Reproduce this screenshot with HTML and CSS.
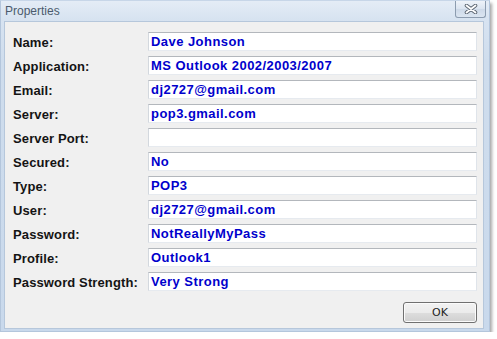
FILE: index.html
```html
<!DOCTYPE html>
<html>
<head>
<meta charset="utf-8">
<link rel="stylesheet" href="styles.css">
</head>
<body>
<div class="window">
  <div class="titlebar">
    <span class="title">Properties</span>
    <button class="close" aria-label="Close">
      <svg width="14" height="10" viewBox="0 0 14 10">
        <path d="M2.5 1.5 L11.5 8.5 M11.5 1.5 L2.5 8.5" stroke="#5a6470" stroke-width="3.6" stroke-linecap="round"/>
        <path d="M2.5 1.5 L11.5 8.5 M11.5 1.5 L2.5 8.5" stroke="#ffffff" stroke-width="1.8" stroke-linecap="round"/>
      </svg>
    </button>
  </div>
  <div class="content">
    <div class="grid">
      <div class="label">Name:</div><div class="field">Dave Johnson</div>
      <div class="label">Application:</div><div class="field">MS Outlook 2002/2003/2007</div>
      <div class="label">Email:</div><div class="field">dj2727@gmail.com</div>
      <div class="label">Server:</div><div class="field">pop3.gmail.com</div>
      <div class="label">Server Port:</div><div class="field"></div>
      <div class="label">Secured:</div><div class="field">No</div>
      <div class="label">Type:</div><div class="field">POP3</div>
      <div class="label">User:</div><div class="field">dj2727@gmail.com</div>
      <div class="label">Password:</div><div class="field">NotReallyMyPass</div>
      <div class="label">Profile:</div><div class="field">Outlook1</div>
      <div class="label">Password Strength:</div><div class="field">Very Strong</div>
    </div>
    <div class="buttons">
      <button class="ok">OK</button>
    </div>
  </div>
</div>
</body>
</html>
```

FILE: styles.css
```css
html, body {
  margin: 0;
  padding: 0;
  background: #ffffff;
}

.window {
  width: 490px;
  height: 332px;
  display: flex;
  flex-direction: column;
  background: linear-gradient(to bottom, #dbe6f3 0px, #cfdded 60px, #c9d9ec 100%);
  box-shadow: 2px 3px 3px rgba(0, 0, 0, 0.35);
  box-sizing: border-box;
  border: 1px solid #b4c6dc;
  border-top-color: #c7d6e8;
}

.titlebar {
  height: 20px;
  display: flex;
  align-items: flex-start;
  justify-content: space-between;
  background: linear-gradient(to bottom, #e4ecf6, #d6e2f0);
  flex: none;
}

.title {
  font-family: "Liberation Sans", Arial, sans-serif;
  font-size: 12px;
  color: #4b5b6d;
  margin: 3px 0 0 4px;
  line-height: 14px;
}

.close {
  width: 31px;
  height: 17px;
  margin: 0 3px 0 0;
  padding: 0;
  box-sizing: border-box;
  border: 1px solid #8c9caf;
  border-top: none;
  border-radius: 0 0 3px 3px;
  background: linear-gradient(to bottom, #eef3f9, #dae4f0 50%, #cdd9e8 51%, #dbe5f1);
  display: flex;
  align-items: center;
  justify-content: center;
}

.content {
  flex: 1;
  margin: 0 5px 3px 3px;
  background: #f0f0f0;
  border: 1px solid #b6c7db;
  padding: 10px 6px 5px 8px;
  display: flex;
  flex-direction: column;
}

.grid {
  display: grid;
  grid-template-columns: 135px 1fr;
  grid-auto-rows: 19px;
  row-gap: 5px;
}

.label {
  font-family: "Liberation Sans", Arial, sans-serif;
  font-weight: bold;
  font-size: 13px;
  letter-spacing: 0.12px;
  color: #141414;
  line-height: 19px;
  padding-top: 1px;
  white-space: nowrap;
}

.field {
  background: #ffffff;
  box-sizing: border-box;
  border: 1px solid;
  border-color: #b3b7bc #dfe4ea #e6eaef #d3d8de;
  font-family: "Liberation Sans", Arial, sans-serif;
  font-weight: bold;
  font-size: 13px;
  letter-spacing: 0.45px;
  color: #0000cc;
  line-height: 17px;
  padding: 0 0 0 2px;
  white-space: nowrap;
}

.buttons {
  margin-top: 11px;
  display: flex;
  justify-content: flex-end;
}

.ok {
  width: 74px;
  height: 21px;
  padding: 0;
  box-sizing: border-box;
  border: 1px solid #707070;
  border-radius: 3px;
  background: linear-gradient(to bottom, #f2f2f2 0%, #ebebeb 50%, #dddddd 51%, #cfcfcf 100%);
  box-shadow: inset 0 0 0 1px #fbfbfb;
  font-family: "DejaVu Sans", sans-serif;
  font-size: 11px;
  color: #1e1e1e;
  line-height: 19px;
}
```
